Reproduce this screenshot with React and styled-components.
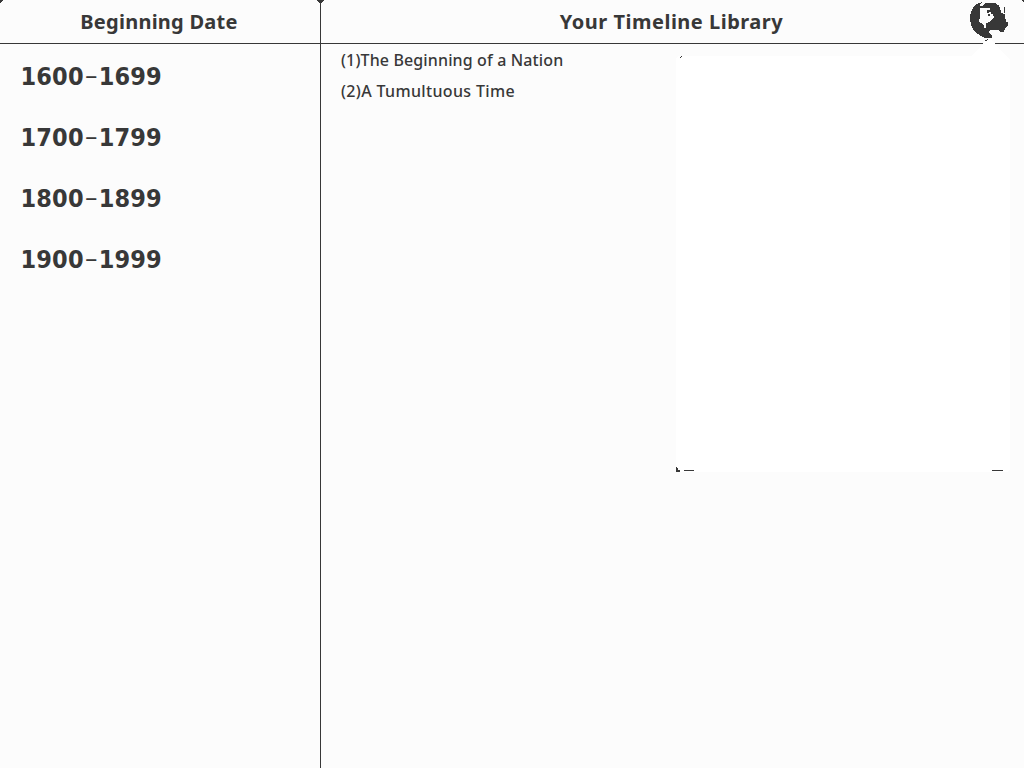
import React from "react";
import styled, { createGlobalStyle } from "styled-components";

const INK = "#383838";
const PAPER = "#fcfcfc";

const GlobalStyle = createGlobalStyle`
  * { box-sizing: border-box; }
  html, body { margin: 0; padding: 0; background: ${PAPER}; }
  body { overflow: hidden; }
`;

const Screen = styled.div`
  position: relative;
  display: grid;
  grid-template-columns: 321px 1fr;
  width: 1024px;
  height: 768px;
  overflow: hidden;
  background: ${PAPER};
  color: ${INK};
  font-family: "Noto Sans", "Open Sans", sans-serif;
`;

const Pane = styled.section`
  display: flex;
  flex-direction: column;
  border-right: ${(p) => (p.$divided ? `1px solid ${INK}` : "0")};
`;

const PaneHeader = styled.header`
  display: flex;
  align-items: center;
  justify-content: center;
  height: 44px;
  padding-right: ${(p) => p.$inset || 0}px;
  border-bottom: 1px solid ${INK};
`;

const Title = styled.h1`
  margin: 0;
  font-size: 20px;
  line-height: 44px;
  font-weight: 700;
  white-space: nowrap;
  letter-spacing: ${(p) => p.$spacing}px;
`;

const DateList = styled.ul`
  list-style: none;
  margin: 0;
  padding: 2px 0 0 20.5px;
`;

const DateRow = styled.li`
  display: flex;
  height: 61px;
  line-height: 61px;
  font-family: "DejaVu Sans Condensed", "DejaVu Sans", sans-serif;
  font-stretch: condensed;
  font-size: 25px;
  font-weight: 700;
  white-space: nowrap;
  letter-spacing: 0.15px;
`;

const Dash = styled.span`
  width: 15px;
  margin-top: -1px;
  text-align: center;
  font-family: "DejaVu Sans", sans-serif;
  font-stretch: normal;
  font-weight: 400;
`;

const TimelineList = styled.ul`
  list-style: none;
  margin: 0;
  padding: 1px 0 0 20px;
`;

const TimelineRow = styled.li`
  height: 31px;
  line-height: 31px;
  font-size: 16px;
  font-weight: 500;
  white-space: nowrap;
  letter-spacing: ${(p) => p.$spacing}px;
`;

const Overlay = styled.svg`
  position: absolute;
  inset: 0;
  pointer-events: none;
`;

const ranges = [["1600", "1699"], ["1700", "1799"], ["1800", "1899"], ["1900", "1999"]];

const timelines = [
  { label: "(1)The Beginning of a Nation", spacing: 0.13 },
  { label: "(2)A Tumultuous Time", spacing: 0.35 },
];

function Decorations() {
  return (
    <Overlay width="1024" height="768" viewBox="0 0 1024 768" shapeRendering="crispEdges">
      <path fill="#fff" d="M676 58l3-2h293l11-12 2-4h7l3 4 15 16v409l-3 3H676z" />
      <path fill={INK} d="M0 0h3v1H2v1H1v1H0zM317 0h7v1h-1v1h-1v1h-1v1h-1V3h-1V2h-1V1h-1zM1022 0h2v2h-1V1h-1z" />
      <path fill={INK} d="M680 57h1v1h-1zM681 56h1v1h-1z" />
      <path fill={INK} d="M676 467h1v1h1v2h2v2h-4zM684 470h10v1h-10zM992 470h11v1h-11z" />
      <g transform="translate(950 0) scale(0.33333)">
        <path fill={INK} d="M98 6L82 11 70 22 62 38 60 55 63 75 72 92 88 105 104 113 126 113 126 106 118 100 119 90 148 90 150 96 160 97 166 86 174 78 174 67 168 64 164 42 154 38 148 18 136 9 112 9z" />
        <path fill={PAPER} d="M98 5L88 16 98 19 104 12 106 8z" />
        <path fill={PAPER} d="M90 25L104 23 120 25 132 34 132 50 129 56 122 64 108 70 107 83 103 83 101 74 96 70 87 66 90 50 90 42z" />
        <path fill={INK} d="M111 30h9v-3h12v8h3v14h-5v-8h-6v-4h-6v3h-7zM115 42h6v6h-6z" />
        <path fill={INK} d="M162 21h3v17h-3zM112 117h3v3h-3v3h-6v-3h6z" />
      </g>
    </Overlay>
  );
}

export default function App() {
  return (
    <>
      <GlobalStyle />
      <Screen>
        <Pane $divided>
          <PaneHeader $inset={2}>
            <Title $spacing={0.25}>Beginning Date</Title>
          </PaneHeader>
          <DateList>
            {ranges.map(([from, to]) => (
              <DateRow key={from}>{from}<Dash>–</Dash>{to}</DateRow>
            ))}
          </DateList>
        </Pane>
        <Pane>
          <PaneHeader $inset={2}>
            <Title $spacing={0.5}>Your Timeline Library</Title>
          </PaneHeader>
          <TimelineList>
            {timelines.map((t) => (
              <TimelineRow key={t.label} $spacing={t.spacing}>{t.label}</TimelineRow>
            ))}
          </TimelineList>
        </Pane>
        <Decorations />
      </Screen>
    </>
  );
}
